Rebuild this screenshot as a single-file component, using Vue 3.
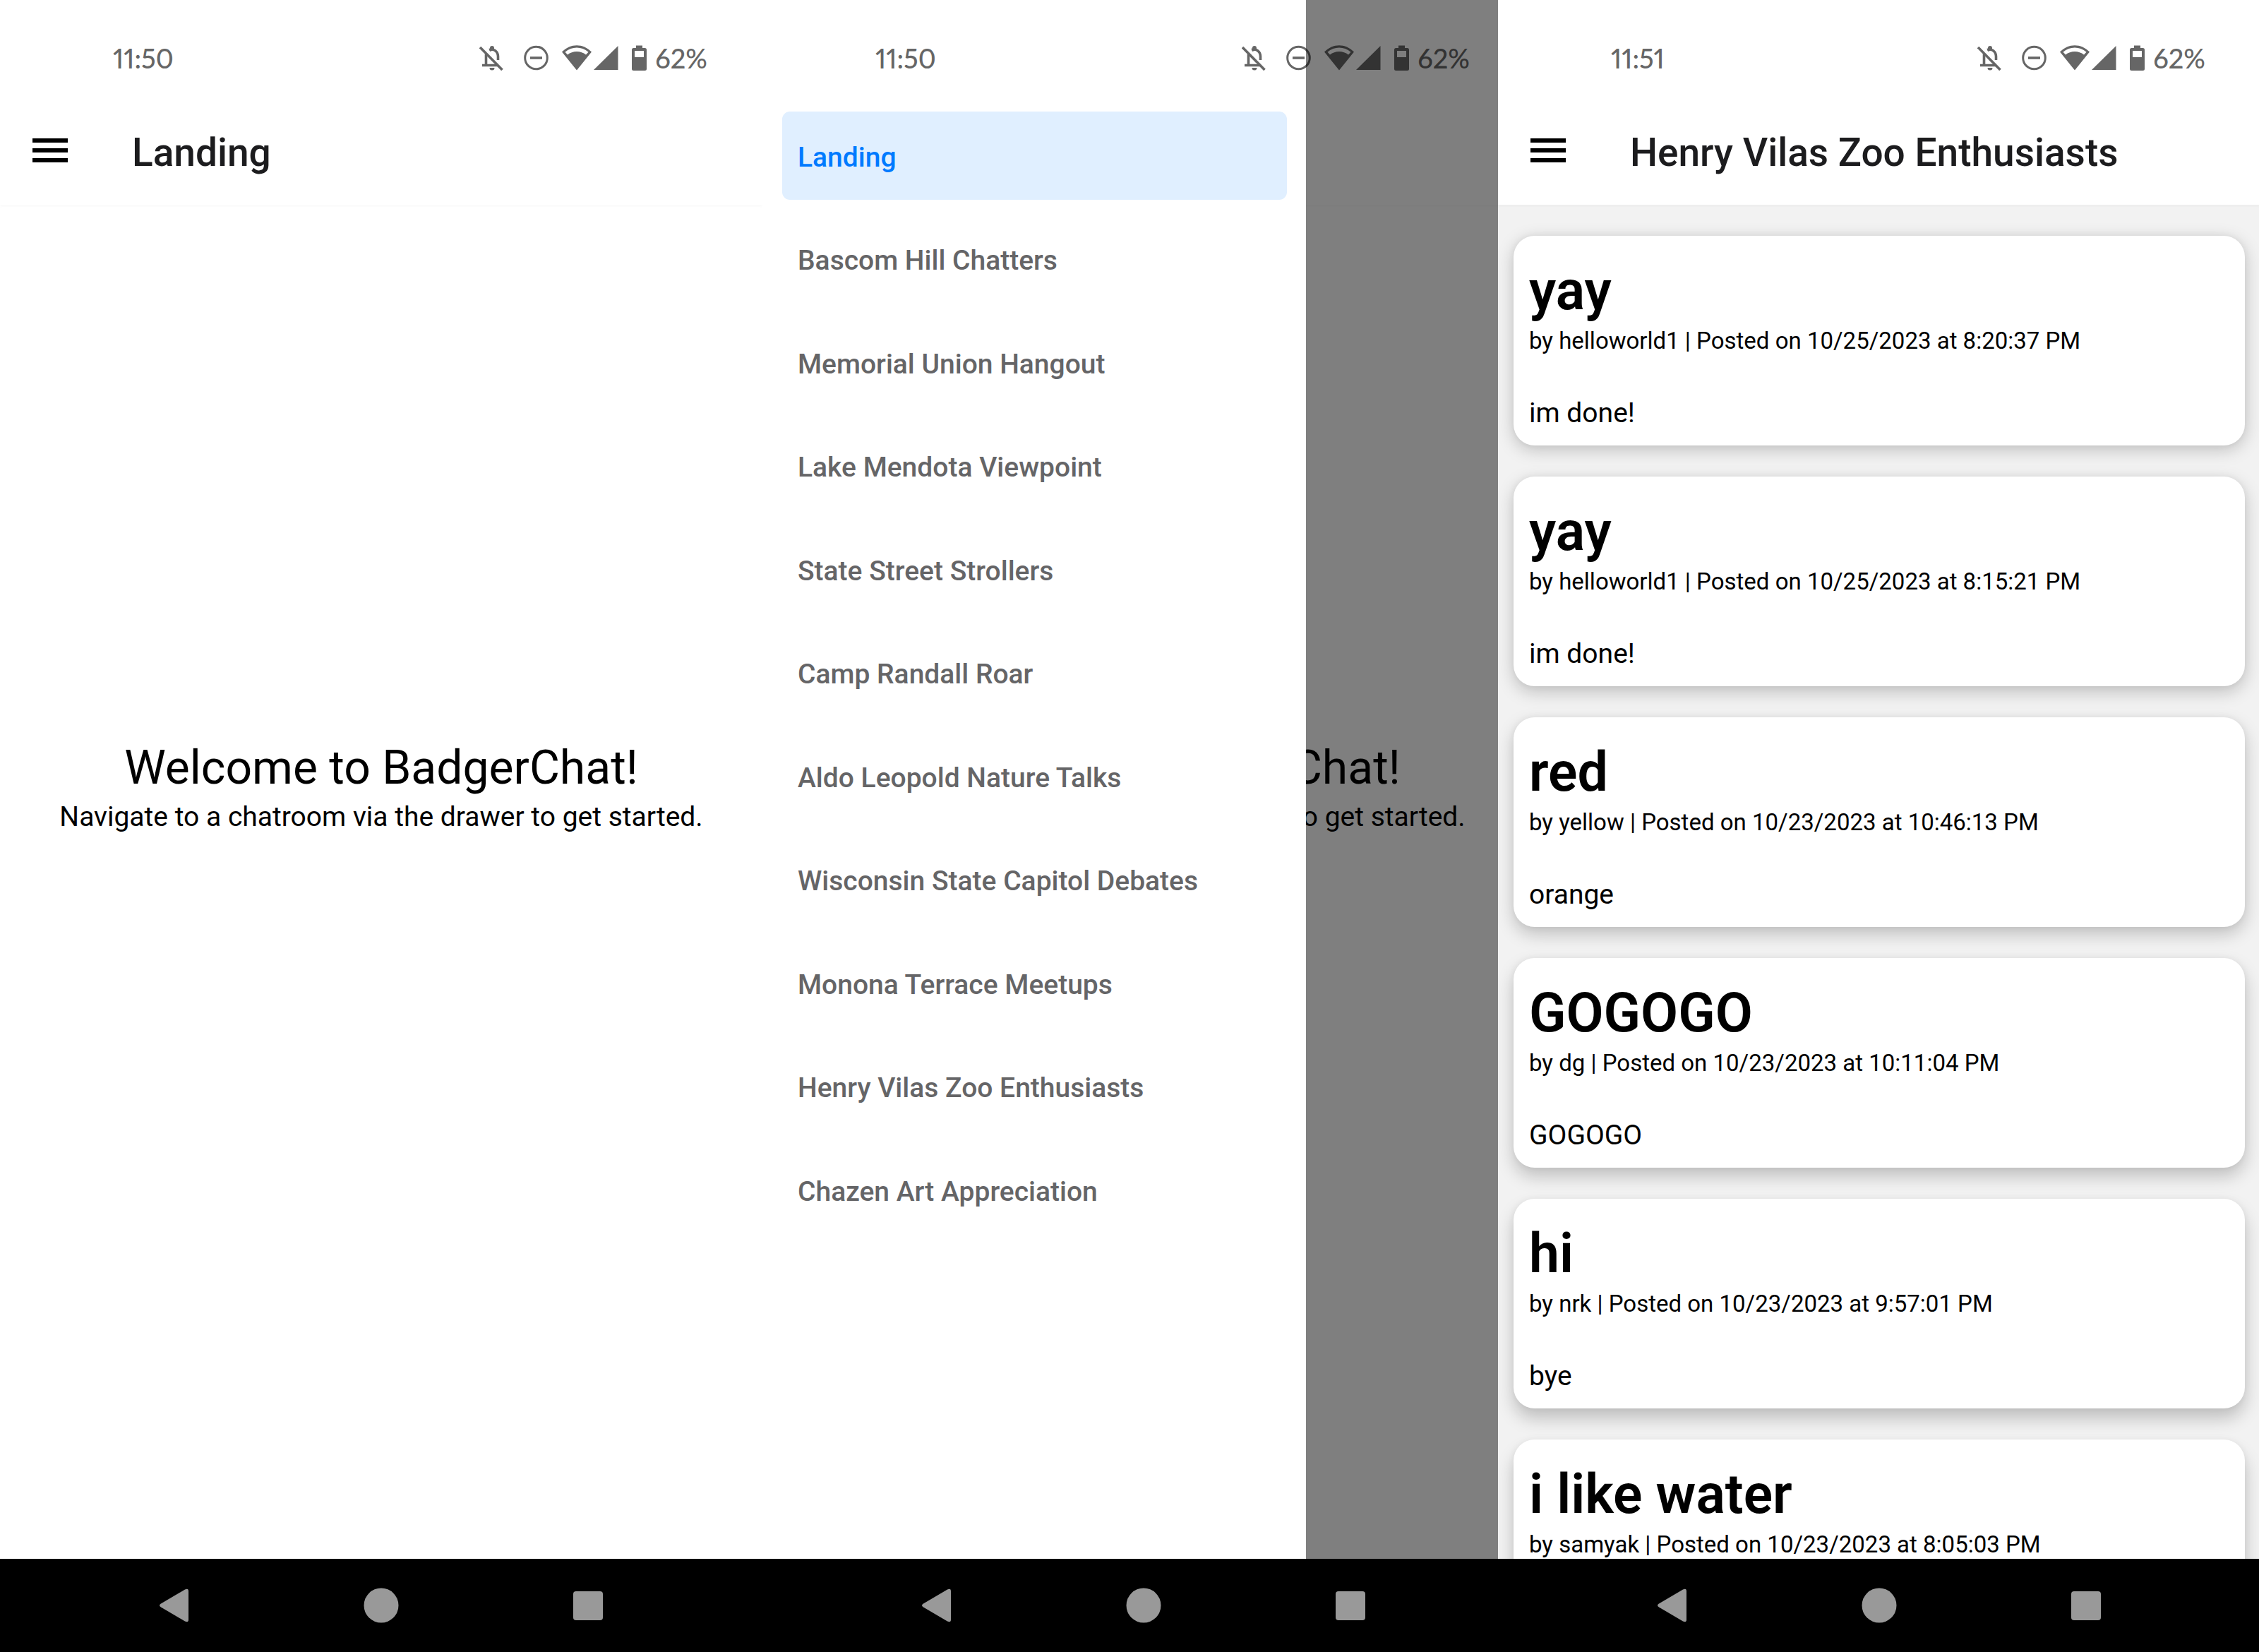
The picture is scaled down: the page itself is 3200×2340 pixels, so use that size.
<script setup>
const rooms = [
  'Landing',
  'Bascom Hill Chatters',
  'Memorial Union Hangout',
  'Lake Mendota Viewpoint',
  'State Street Strollers',
  'Camp Randall Roar',
  'Aldo Leopold Nature Talks',
  'Wisconsin State Capitol Debates',
  'Monona Terrace Meetups',
  'Henry Vilas Zoo Enthusiasts',
  'Chazen Art Appreciation',
]

const posts = [
  { title: 'yay', poster: 'helloworld1', date: '10/25/2023', time: '8:20:37 PM', content: 'im done!' },
  { title: 'yay', poster: 'helloworld1', date: '10/25/2023', time: '8:15:21 PM', content: 'im done!' },
  { title: 'red', poster: 'yellow', date: '10/23/2023', time: '10:46:13 PM', content: 'orange' },
  { title: 'GOGOGO', poster: 'dg', date: '10/23/2023', time: '10:11:04 PM', content: 'GOGOGO' },
  { title: 'hi', poster: 'nrk', date: '10/23/2023', time: '9:57:01 PM', content: 'bye' },
  { title: 'i like water', poster: 'samyak', date: '10/23/2023', time: '8:05:03 PM', content: 'water' },
]

const phones = [
  { id: 'landing', clock: '11:50', title: 'Landing' },
  { id: 'drawer', clock: '11:50', title: 'Landing' },
  { id: 'chatroom', clock: '11:51', title: 'Henry Vilas Zoo Enthusiasts' },
]

// Cards cast a longer shadow the further down the screen they sit
const shadow = (i) => {
  const y = 6 + i * 2
  return { boxShadow: `0 ${y}px 24px rgba(0, 0, 0, 0.21), 0 0 10px rgba(0, 0, 0, 0.05)` }
}
</script>

<template>
  <div class="board">
    <section v-for="phone in phones" :key="phone.id" class="phone" :class="phone.id">
      <div class="screen">
        <header class="status">
          <time class="clock">{{ phone.clock }}</time>
          <svg class="indicators" viewBox="0 0 238 36" width="238" height="36" aria-hidden="true">
            <g fill="none" stroke="currentColor" stroke-width="3.6">
              <path d="M1 3 32.500 35" />
              <path d="M9.500 13V28.500M4 28.500H27" />
              <path d="M14 6.500C20 4.500 26.500 8.500 26.500 16V21" />
              <circle cx="80.500" cy="18" r="15.800" stroke-width="3" />
              <path d="M72 18H89" />
            </g>
            <path fill="currentColor" d="M15 5V4a3 3 0 0 1 6 0v3l-6 2zM14.500 32h7a3.500 3.500 0 0 1-7 0z" />
            <path
              fill="currentColor"
              fill-rule="evenodd"
              d="M117 9.500C129 -3 147 -3 159 9.500L138 35.500ZM121.500 9.800 125 13.600C132 7.500 144 7.500 151 13.600L154.500 9.800C145 1.500 131 1.500 121.500 9.800Z"
            />
            <path fill="currentColor" d="M196.500 1V35H162Z" />
            <path
              fill="currentColor"
              fill-rule="evenodd"
              d="M222 .5h9V4h3.500a2.500 2.500 0 0 1 2.500 2.500v27a2.500 2.500 0 0 1-2.500 2.500h-16a2.500 2.500 0 0 1-2.500-2.500v-27A2.500 2.500 0 0 1 218.500 4H222ZM220 8v9h13V8Z"
            />
          </svg>
          <span class="percent">62%</span>
        </header>

        <div class="appbar">
          <button class="menu" type="button" aria-label="Open menu">
            <svg viewBox="0 0 50 34" width="50" height="34" aria-hidden="true">
              <path d="M0 0H50V6H0ZM0 14H50V20H0ZM0 28H50V34H0Z" />
            </svg>
          </button>
          <h1 class="title">{{ phone.title }}</h1>
        </div>

        <main v-if="phone.id === 'chatroom'" class="feed">
          <article v-for="(post, i) in posts" :key="i" class="card" :style="shadow(i)">
            <h2 class="card-title">{{ post.title }}</h2>
            <p class="meta">by {{ post.poster }} | Posted on {{ post.date }} at {{ post.time }}</p>
            <p class="content">{{ post.content }}</p>
          </article>
        </main>
        <main v-else class="welcome">
          <h2 class="welcome-title">Welcome to BadgerChat!</h2>
          <p class="welcome-text">Navigate to a chatroom via the drawer to get started.</p>
        </main>

        <template v-if="phone.id === 'drawer'">
          <nav class="panel" aria-label="Chatrooms">
            <a
              v-for="(room, i) in rooms"
              :key="room"
              href="#"
              class="room"
              :class="{ active: i === 0 }"
            >{{ room }}</a>
          </nav>
          <div class="scrim"></div>
        </template>
      </div>

      <footer class="system">
        <button type="button" aria-label="Back">
          <svg viewBox="0 0 52 52" width="52" height="52" aria-hidden="true">
            <path d="M7 23.500 41 3.500Q46 1 46 6V46Q46 51 41 48.500L7 28.500Q3 26 7 23.500Z" />
          </svg>
        </button>
        <button type="button" aria-label="Home">
          <svg viewBox="0 0 52 52" width="52" height="52" aria-hidden="true">
            <circle cx="26" cy="26" r="24.500" />
          </svg>
        </button>
        <button type="button" aria-label="Recent apps">
          <svg viewBox="0 0 52 52" width="52" height="52" aria-hidden="true">
            <rect x="5" y="6" width="42" height="41" rx="4" />
          </svg>
        </button>
      </footer>
    </section>
  </div>
</template>

<style>
body {
  margin: 0;
  background: #fff;
}
</style>

<style scoped>
.board {
  display: flex;
  height: 100vh;
  overflow: hidden;
  font-family: Roboto, "Liberation Sans", sans-serif;
  color: #000;
}

h1,
h2,
p {
  margin: 0;
  font-weight: 400;
}

button {
  display: flex;
  padding: 0;
  border: 0;
  background: none;
}

.phone {
  display: flex;
  flex: 0 0 33.75%;
  flex-direction: column;
  isolation: isolate;
  background: #fff;
}

.chatroom {
  margin-left: -38px;
}

.screen {
  position: relative;
  display: flex;
  flex: 1;
  flex-direction: column;
  min-height: 0;
  overflow: hidden;
}

.status {
  position: relative;
  z-index: 2;
  display: flex;
  flex: none;
  align-items: center;
  box-sizing: border-box;
  height: 136px;
  padding: 28px 78px 0 160px;
  color: #666;
  font-family: Lato, sans-serif;
  font-size: 38px;
  font-weight: 500;
  font-variant-numeric: proportional-nums;
}

.indicators {
  margin-left: auto;
}

.percent {
  margin-left: 11px;
}

.appbar {
  position: relative;
  display: flex;
  flex: none;
  align-items: center;
  height: 154px;
  padding-left: 46px;
  box-shadow: 0 3px 3px rgba(0, 0, 0, 0.02);
}

.menu {
  margin-right: 91px;
}

.title {
  padding-top: 6px;
  color: #1c1c1e;
  font-size: 55px;
  font-weight: 500;
  line-height: 66px;
}

.welcome {
  display: flex;
  flex: 1;
  flex-direction: column;
  align-items: center;
  justify-content: center;
  padding-bottom: 266px;
}

.welcome-title {
  font-size: 66px;
  line-height: 82px;
}

.welcome-text {
  font-size: 39px;
  line-height: 56px;
}

.feed {
  display: flex;
  flex: 1;
  flex-direction: column;
  gap: 44px;
  min-height: 0;
  padding: 44px 22px 0;
  background: #f2f2f2;
}

.card {
  flex: none;
  padding: 22px 22px 20px;
  border-radius: 30px;
  background: #fff;
}

.card-title {
  padding-top: 10px;
  font-size: 77px;
  font-weight: 600;
  line-height: 92px;
}

.meta {
  padding-top: 3px;
  font-size: 33px;
  line-height: 44px;
}

.content {
  margin-top: 54px;
  font-size: 39px;
  line-height: 52px;
}

.panel {
  position: absolute;
  z-index: 1;
  top: 0;
  bottom: 0;
  left: 0;
  display: grid;
  grid-template-rows: repeat(11, 125px);
  align-content: space-between;
  box-sizing: border-box;
  width: 770px;
  padding: 158px 27px 460px 28px;
  background: #fff;
}

.room {
  display: flex;
  align-items: center;
  padding: 4px 0 0 22px;
  border-radius: 11px;
  color: #656567;
  font-size: 39px;
  font-weight: 500;
  text-decoration: none;
}

.active {
  background: #e0efff;
  color: #007aff;
}

.scrim {
  position: absolute;
  z-index: 3;
  top: 0;
  right: 0;
  bottom: 0;
  left: 770px;
  background: rgba(0, 0, 0, 0.5);
}

.system {
  display: flex;
  flex: none;
  align-items: center;
  justify-content: center;
  gap: 241px;
  height: 132px;
  background: #000;
}

.system svg {
  fill: #999;
}
</style>
